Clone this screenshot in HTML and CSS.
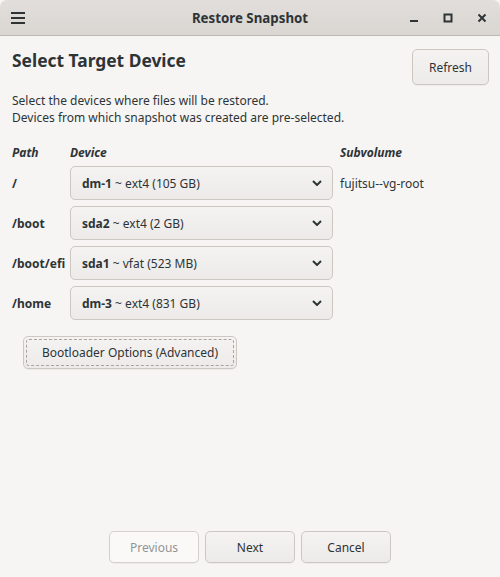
FILE: index.html
```html
<!DOCTYPE html>
<html>
<head>
<meta charset="utf-8">
<link rel="stylesheet" href="styles.css">
</head>
<body>
<div class="window">
  <header class="titlebar">
    <span class="menu-icon">
      <svg width="14" height="12" viewBox="0 0 14 12"><rect x="0" y="0" width="14" height="2" fill="#2e3436"/><rect x="0" y="5" width="14" height="2" fill="#2e3436"/><rect x="0" y="10" width="14" height="2" fill="#2e3436"/></svg>
    </span>
    <span class="title">Restore Snapshot</span>
    <span class="controls">
      <span class="ctl"><svg width="10" height="10" viewBox="0 0 10 10"><rect x="1" y="7" width="8" height="2" fill="#2e3436"/></svg></span>
      <span class="ctl"><svg width="10" height="10" viewBox="0 0 10 10"><rect x="1.5" y="1.5" width="7" height="7" fill="none" stroke="#2e3436" stroke-width="2"/></svg></span>
      <span class="ctl"><svg width="10" height="10" viewBox="0 0 10 10"><path d="M1.5 1.5 L8.5 8.5 M8.5 1.5 L1.5 8.5" stroke="#2e3436" stroke-width="2"/></svg></span>
    </span>
  </header>
  <main class="content">
    <div class="top-row">
      <h1 class="heading">Select Target Device</h1>
      <button class="btn refresh">Refresh</button>
    </div>
    <p class="desc">Select the devices where files will be restored.<br>Devices from which snapshot was created are pre-selected.</p>
    <div class="grid">
      <div class="col-head">Path</div>
      <div class="col-head">Device</div>
      <div class="col-head sub">Subvolume</div>

      <div class="path">/</div>
      <div class="combo"><span><b>dm-1</b> ~ ext4 (105 GB)</span><svg class="chev" width="10" height="6" viewBox="0 0 10 6"><path d="M1 1 L5 5 L9 1" fill="none" stroke="#2e3436" stroke-width="2"/></svg></div>
      <div class="subvol">fujitsu--vg-root</div>

      <div class="path">/boot</div>
      <div class="combo"><span><b>sda2</b> ~ ext4 (2 GB)</span><svg class="chev" width="10" height="6" viewBox="0 0 10 6"><path d="M1 1 L5 5 L9 1" fill="none" stroke="#2e3436" stroke-width="2"/></svg></div>
      <div class="subvol"></div>

      <div class="path">/boot/efi</div>
      <div class="combo"><span><b>sda1</b> ~ vfat (523 MB)</span><svg class="chev" width="10" height="6" viewBox="0 0 10 6"><path d="M1 1 L5 5 L9 1" fill="none" stroke="#2e3436" stroke-width="2"/></svg></div>
      <div class="subvol"></div>

      <div class="path">/home</div>
      <div class="combo"><span><b>dm-3</b> ~ ext4 (831 GB)</span><svg class="chev" width="10" height="6" viewBox="0 0 10 6"><path d="M1 1 L5 5 L9 1" fill="none" stroke="#2e3436" stroke-width="2"/></svg></div>
      <div class="subvol"></div>
    </div>
    <button class="btn boot"><span class="focus">Bootloader Options (Advanced)</span></button>
  </main>
  <footer class="footer">
    <button class="btn nav disabled">Previous</button>
    <button class="btn nav">Next</button>
    <button class="btn nav">Cancel</button>
  </footer>
</div>
</body>
</html>
```
FILE: styles.css
```css
html, body {
  margin: 0;
  padding: 0;
  background: #f6f5f4;
}
body {
  font-family: "Noto Sans", "Open Sans", sans-serif;
  color: #2e3436;
  font-size: 12px;
}
.window {
  width: 500px;
  height: 577px;
  display: flex;
  flex-direction: column;
  background: #f6f5f4;
  overflow: hidden;
}
.titlebar {
  height: 36px;
  flex: none;
  box-sizing: border-box;
  display: flex;
  align-items: center;
  background: linear-gradient(#e1dedb, #dad6d2);
  border-bottom: 1px solid #bfb8b1;
  border-radius: 7px 7px 0 0;
  position: relative;
}
.menu-icon {
  display: flex;
  margin-left: 11px;
  margin-top: 1px;
}
.title {
  position: absolute;
  left: 0;
  right: 0;
  text-align: center;
  font-weight: bold;
  font-size: 13.3px;
  pointer-events: none;
}
.controls {
  margin-left: auto;
  display: flex;
  gap: 24px;
  margin-right: 13px;
}
.ctl {
  display: flex;
  width: 10px;
  height: 10px;
}
.content {
  flex: 1;
  padding: 0 12px;
}
.top-row {
  display: flex;
  justify-content: space-between;
  align-items: flex-start;
  margin-top: 13px;
}
.heading {
  margin: -1px 0 0;
  font-size: 17.4px;
  font-weight: bold;
  line-height: 24px;
}
.btn {
  font-family: inherit;
  font-size: 12px;
  color: #2e3436;
  background: linear-gradient(#f4f3f2, #edebe9);
  border: 1px solid #cdc7c2;
  border-radius: 5px;
  box-shadow: 0 1px 0 rgba(0,0,0,0.04);
  padding: 0;
}
.refresh {
  width: 77px;
  height: 36px;
  margin-right: -1px;
}
.desc {
  margin: 7px 0 0;
  line-height: 17px;
}
.grid {
  display: grid;
  grid-template-columns: 58px 263px 1fr;
  grid-template-rows: 19px;
  grid-auto-rows: 34px;
  row-gap: 6px;
  margin-top: 15px;
}
.grid .col-head {
  font-weight: bold;
  font-style: italic;
  height: 20px;
  line-height: 20px;
  margin-top: 2px;
  align-self: start;
}
.grid .col-head.sub, .subvol {
  padding-left: 7px;
}
.path {
  font-weight: bold;
  display: flex;
  align-items: center;
}
.subvol {
  display: flex;
  align-items: center;
}
.combo {
  box-sizing: border-box;
  height: 34px;
  display: flex;
  align-items: center;
  justify-content: space-between;
  padding: 0 10px 0 11px;
  background: linear-gradient(#f4f3f2, #edebe9);
  border: 1px solid #cdc7c2;
  border-radius: 5px;
}
.combo b {
  font-weight: bold;
}
.chev {
  display: block;
}
.boot {
  margin-top: 16px;
  margin-left: 11px;
  width: 214px;
  height: 33px;
  padding: 2px;
  display: block;
}
.boot .focus {
  display: flex;
  align-items: center;
  justify-content: center;
  height: 100%;
  border: 1px dashed #a9a49f;
  border-radius: 3px;
  box-sizing: border-box;
}
.footer {
  flex: none;
  display: flex;
  justify-content: center;
  gap: 6px;
  padding-bottom: 14px;
}
.nav {
  width: 90px;
  height: 32px;
}
.nav.disabled {
  background: #faf9f8;
  color: #929595;
  border-color: #d5d0cc;
}
```
